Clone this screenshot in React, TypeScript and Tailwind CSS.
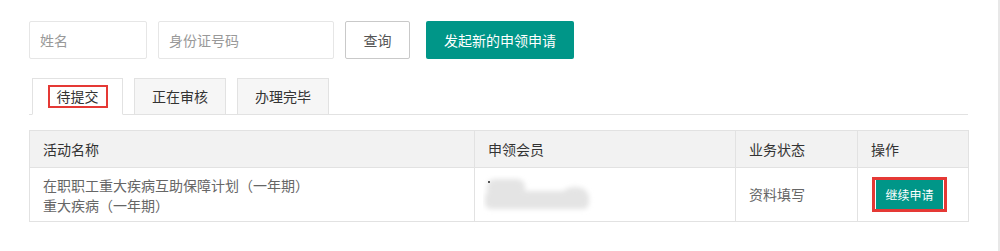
import React from "react";

const font = {
  fontFamily: '"Noto Sans CJK SC", "Liberation Sans", sans-serif',
};

const tabs = ["待提交", "正在审核", "办理完毕"];

const Blurred: React.FC = () => (
  <svg width="112" height="40" viewBox="0 0 112 40">
    <defs>
      <filter id="bl" x="-20%" y="-40%" width="140%" height="180%">
        <feGaussianBlur stdDeviation="2.5" />
      </filter>
    </defs>
    <g fill="#e4e4e4" filter="url(#bl)">
      <rect x="4" y="4" width="38" height="18" rx="8" />
      <rect x="2" y="16" width="104" height="18" rx="6" />
      <ellipse cx="92" cy="18" rx="12" ry="6" />
    </g>
    <rect x="5" y="6" width="2" height="2" fill="#555" />
  </svg>
);

const App: React.FC = () => {
  return (
    <div style={font} className="flex h-[251px] w-[1000px] bg-white text-[14px]">
      <div className="w-[998px] pl-[29px] pt-[21px]">
        {/* search bar */}
        <div className="flex items-center">
          <input
            placeholder="姓名"
            className="h-[38px] w-[118px] rounded-[2px] border border-[#e6e6e6] px-[10px] text-[14px] placeholder:text-[#999] outline-none"
          />
          <input
            placeholder="身份证号码"
            className="ml-[11px] h-[38px] w-[176px] rounded-[2px] border border-[#e6e6e6] px-[10px] text-[14px] placeholder:text-[#999] outline-none"
          />
          <button className="ml-[11px] h-[38px] w-[65px] rounded-[2px] border border-[#c9c9c9] bg-white text-[14px] text-[#555]">
            查询
          </button>
          <button className="ml-[16px] h-[38px] w-[148px] rounded-[2px] bg-[#009688] text-[14px] text-white">
            发起新的申领申请
          </button>
        </div>

        {/* tabs */}
        <div className="mt-[19px] flex w-[939px] border-b border-[#e2e2e2] pl-[3px]">
          {tabs.map((t, i) =>
            i === 0 ? (
              <div
                key={t}
                className="-mb-px flex h-[37px] w-[91px] items-center justify-center border border-b-white border-[#e2e2e2] bg-white"
              >
                <span className="border-2 border-[#e53935] px-[7px] py-px leading-[17px] text-[#333]">
                  {t}
                </span>
              </div>
            ) : (
              <div
                key={t}
                className="ml-[11px] -mb-px flex h-[37px] w-[92px] items-center justify-center border border-[#e2e2e2] bg-[#f6f6f6] text-[#333]"
              >
                {t}
              </div>
            )
          )}
        </div>

        {/* table */}
        <table className="mt-[15px] w-[939px] table-fixed border-collapse text-[14px]">
          <colgroup>
            <col className="w-[445px]" />
            <col className="w-[261px]" />
            <col className="w-[122px]" />
            <col className="w-[111px]" />
          </colgroup>
          <thead>
            <tr className="h-[37px] bg-[#f2f2f2] text-[#333]">
              {["活动名称", "申领会员", "业务状态", "操作"].map((h) => (
                <th
                  key={h}
                  className="border border-[#e2e2e2] px-[13px] text-left font-normal"
                >
                  {h}
                </th>
              ))}
            </tr>
          </thead>
          <tbody>
            <tr className="h-[54px] text-[#666]">
              <td className="border border-[#e2e2e2] px-[13px] leading-[20px]">
                在职职工重大疾病互助保障计划（一年期）
                <br />
                重大疾病（一年期）
              </td>
              <td className="border border-[#e2e2e2] px-[8px]">
                <Blurred />
              </td>
              <td className="border border-[#e2e2e2] px-[13px]">资料填写</td>
              <td className="border border-[#e2e2e2] px-[14px]">
                <div className="inline-flex border-[3px] border-[#e53935]">
                  <button className="h-[29px] w-[69px] border-x border-white bg-[#009688] text-[12px] text-white">
                    继续申请
                  </button>
                </div>
              </td>
            </tr>
          </tbody>
        </table>
      </div>
      <div className="w-[2px] bg-[#e8e8e8]" />
    </div>
  );
};

export default App;
